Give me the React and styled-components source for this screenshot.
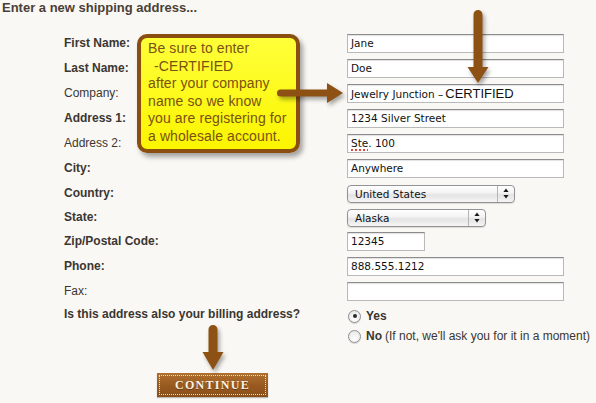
import React from 'react'
import styled, { createGlobalStyle } from 'styled-components'

const GlobalStyle = createGlobalStyle`
  html, body {
    margin: 0;
    padding: 0;
    background: #faf8f4;
  }
  body {
    font-family: "Liberation Sans", Arial, sans-serif;
    color: #3b3632;
  }
`

const Page = styled.div`
  position: relative;
  width: 596px;
  height: 403px;
  overflow: hidden;
`

const Heading = styled.h1`
  margin: 0 0 15px;
  padding-left: 2px;
  font-size: 13px;
  line-height: 16px;
  font-weight: bold;
  color: #4a3f37;
`

const Form = styled.div`
  padding-left: 64px;
  display: flex;
  flex-direction: column;
`

const Row = styled.div`
  display: grid;
  grid-template-columns: 283px 249px;
  align-items: center;
  height: ${p => p.h || 25}px;
`

const Label = styled.div`
  font-size: 12px;
  line-height: ${p => p.lh || 25}px;
  font-weight: ${p => (p.$bold ? 'bold' : 'normal')};
  color: #3b3632;
  align-self: ${p => (p.$top ? 'start' : 'center')};
  white-space: nowrap;
`

const Field = styled.div`
  box-sizing: border-box;
  width: ${p => p.w || 217}px;
  height: 19px;
  padding: 0 3px;
  background: #fff;
  border: 1px solid #b9b9b9;
  border-top-color: #8c8c8c;
  box-shadow: inset 0 1px 1px rgba(0, 0, 0, 0.12);
  font-family: "DejaVu Sans", "Lucida Grande", sans-serif;
  font-size: 10.5px;
  line-height: 17px;
  color: #111;
  white-space: nowrap;
  overflow: hidden;
`

const Big = styled.span`
  margin-left: 2px;
  font-family: "Liberation Sans", Arial, sans-serif;
  font-size: 13px;
`

const Spell = styled.span`
  text-decoration: underline dotted #e0463a;
  text-decoration-thickness: 2px;
  text-underline-offset: 2px;
`

const Select = styled.div`
  box-sizing: border-box;
  width: ${p => p.w}px;
  height: 18px;
  display: flex;
  align-items: stretch;
  border: 1px solid #939393;
  border-radius: 4px;
  background: linear-gradient(#ffffff, #f2f2f2 45%, #e3e3e3 55%, #f6f6f6);
  box-shadow: 0 1px 1px rgba(0, 0, 0, 0.12);
  font-family: "DejaVu Sans", "Lucida Grande", sans-serif;
  font-size: 10.5px;
  color: #111;
`

const SelectText = styled.span`
  flex: 1;
  padding-left: 7px;
  line-height: 16px;
`

const SelectArrows = styled.span`
  width: 16px;
  border-left: 1px solid #b4b4b4;
  display: flex;
  align-items: center;
  justify-content: center;
`

const Radios = styled.div`
  padding-top: 2px;
  display: flex;
  flex-direction: column;
`

const RadioRow = styled.div`
  height: 20px;
  display: flex;
  align-items: center;
  font-size: 12px;
  color: #3b3632;
  white-space: nowrap;
`

const RadioDot = styled.span`
  flex: 0 0 auto;
  box-sizing: border-box;
  width: 13px;
  height: 13px;
  margin: 0 5px 0 1px;
  border-radius: 50%;
  border: 1px solid #8f8f8f;
  background: radial-gradient(circle at 50% 70%, #ffffff, #e2e2e2);
  box-shadow: 0 1px 1px rgba(0, 0, 0, 0.15);
  display: flex;
  align-items: center;
  justify-content: center;
  &::after {
    content: '';
    width: 4px;
    height: 4px;
    border-radius: 50%;
    background: ${p => (p.$on ? '#2a2a2a' : 'transparent')};
  }
`

const Strong = styled.b`
  margin-right: 3px;
`

const ContinueRow = styled.div`
  padding: 27px 0 0 157px;
`

const ContinueButton = styled.button`
  position: relative;
  width: 111px;
  height: 24px;
  padding: 0;
  border: 0;
  background: linear-gradient(#b0702f, #97591f 55%, #8a4f1a);
  box-shadow: 0 1px 1px rgba(0, 0, 0, 0.25);
  font-family: "Liberation Serif", "Times New Roman", serif;
  font-weight: bold;
  font-size: 12px;
  letter-spacing: 1.3px;
  color: #fbf2e2;
  text-shadow: 0 1px 0 rgba(60, 25, 0, 0.5);
  &::before {
    content: '';
    position: absolute;
    inset: 2px;
    border: 1px dotted #f2e2c6;
  }
`

const Note = styled.div`
  position: absolute;
  left: 137px;
  top: 34px;
  box-sizing: border-box;
  width: 163px;
  height: 119px;
  padding: 2px 0 0 7px;
  border: 4px solid #8a4f10;
  border-radius: 10px;
  background: linear-gradient(#ffff3a, #fbf500);
  box-shadow: 3px 4px 5px rgba(0, 0, 0, 0.35);
  font-size: 14px;
  letter-spacing: 0.1px;
  line-height: 17.6px;
  color: #7a5212;
  white-space: nowrap;
`

const NoteLine = styled.div`
  padding-left: ${p => p.indent || 0}px;
`

const ArrowSvg = styled.svg`
  position: absolute;
  left: ${p => p.x}px;
  top: ${p => p.y}px;
  filter: drop-shadow(2px 3px 2px rgba(0, 0, 0, 0.35));
  overflow: visible;
`

const ARROW = '#8d5113'

function RightArrow({ x, y }) {
  return (
    <ArrowSvg x={x} y={y} width="80" height="32" viewBox="0 0 80 32">
      <path d="M10.5 11.5 H57 V5 L73 15 L57 25 V18.5 H10.5 A3.5 3.5 0 0 1 10.5 11.5 Z" fill={ARROW} />
    </ArrowSvg>
  )
}

function DownArrow({ x, y, len, head = 16 }) {
  const tip = len
  const hs = tip - head
  return (
    <ArrowSvg x={x} y={y} width="32" height={len + 4} viewBox={`0 0 32 ${len + 4}`}>
      <path
        d={`M11.5 9.5 A4.5 4.5 0 0 1 20.5 9.5 V${hs} H26.5 L16 ${tip} L5.5 ${hs} H11.5 Z`}
        fill={ARROW}
      />
    </ArrowSvg>
  )
}

function UpDown() {
  return (
    <svg width="6" height="11" viewBox="0 0 6 11">
      <path d="M3 0.5 L5.6 4 H0.4 Z M3 10.5 L5.6 7 H0.4 Z" fill="#1a1a1a" />
    </svg>
  )
}

export default function App() {
  return (
    <Page>
      <GlobalStyle />
      <Heading>Enter a new shipping address...</Heading>
      <Form>
        <Row>
          <Label $bold>First Name:</Label>
          <Field>Jane</Field>
        </Row>
        <Row>
          <Label $bold>Last Name:</Label>
          <Field>Doe</Field>
        </Row>
        <Row>
          <Label>Company:</Label>
          <Field>
            Jewelry Junction –<Big>CERTIFIED</Big>
          </Field>
        </Row>
        <Row>
          <Label $bold>Address 1:</Label>
          <Field>1234 Silver Street</Field>
        </Row>
        <Row>
          <Label>Address 2:</Label>
          <Field>
            <Spell>Ste</Spell>. 100
          </Field>
        </Row>
        <Row>
          <Label $bold>City:</Label>
          <Field>Anywhere</Field>
        </Row>
        <Row h={24}>
          <Label $bold>Country:</Label>
          <Select w={168}>
            <SelectText>United States</SelectText>
            <SelectArrows>
              <UpDown />
            </SelectArrows>
          </Select>
        </Row>
        <Row h={24}>
          <Label $bold>State:</Label>
          <Select w={139}>
            <SelectText>Alaska</SelectText>
            <SelectArrows>
              <UpDown />
            </SelectArrows>
          </Select>
        </Row>
        <Row>
          <Label $bold>Zip/Postal Code:</Label>
          <Field w={78}>12345</Field>
        </Row>
        <Row>
          <Label $bold>Phone:</Label>
          <Field>888.555.1212</Field>
        </Row>
        <Row>
          <Label>Fax:</Label>
          <Field />
        </Row>
        <Row h={42}>
          <Label $bold $top lh={20}>
            Is this address also your billing address?
          </Label>
          <Radios>
            <RadioRow>
              <RadioDot $on />
              <b>Yes</b>
            </RadioRow>
            <RadioRow>
              <RadioDot />
              <Strong>No</Strong>(If not, we'll ask you for it in a moment)
            </RadioRow>
          </Radios>
        </Row>
      </Form>
      <ContinueRow>
        <ContinueButton>CONTINUE</ContinueButton>
      </ContinueRow>

      <Note>
        <NoteLine>Be sure to enter</NoteLine>
        <NoteLine indent={6}>-CERTIFIED</NoteLine>
        <NoteLine>after your company</NoteLine>
        <NoteLine>name so we know</NoteLine>
        <NoteLine>you are registering for</NoteLine>
        <NoteLine>a wholesale account.</NoteLine>
      </Note>
      <RightArrow x={270} y={78} />
      <DownArrow x={462} y={5} len={78} />
      <DownArrow x={197} y={320} len={50} head={18} />
    </Page>
  )
}
